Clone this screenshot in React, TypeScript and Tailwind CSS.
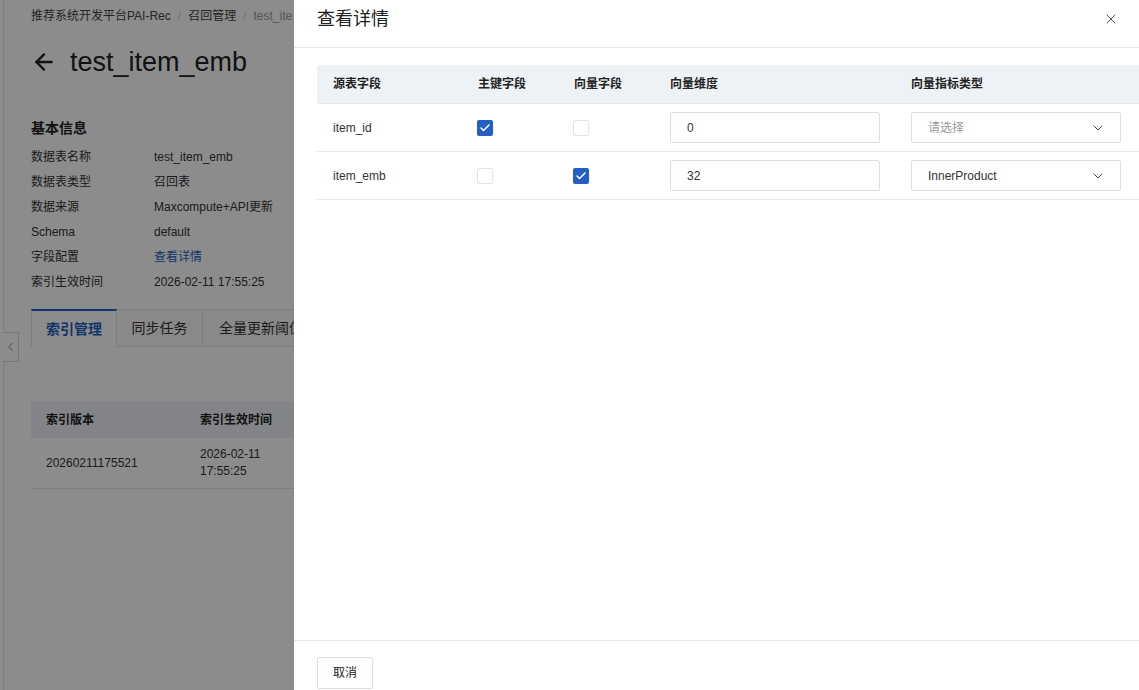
import { ArrowLeft, ChevronDown, ChevronLeft, X, Check } from "lucide-react";

const font = { fontFamily: '"Liberation Sans", "Noto Sans CJK SC", sans-serif' };

const info: [string, string, boolean?][] = [
  ["数据表名称", "test_item_emb"],
  ["数据表类型", "召回表"],
  ["数据来源", "Maxcompute+API更新"],
  ["Schema", "default"],
  ["字段配置", "查看详情", true],
  ["索引生效时间", "2026-02-11 17:55:25"],
];

const cols = "grid grid-cols-[145px_96px_96px_241px_244px]";

function Box({ checked }: { checked: boolean }) {
  if (checked)
    return (
      <span className="flex h-4 w-4 items-center justify-center rounded-[2px] bg-[#2460c2]">
        <Check className="h-3 w-3 text-white" strokeWidth={3} />
      </span>
    );
  return <span className="block h-4 w-4 rounded-[2px] border border-[#e3e3e3] bg-white" />;
}

export default function App() {
  return (
    <div className="relative h-[690px] w-[1139px] overflow-hidden bg-white text-[#333]" style={font}>
      {/* page underneath */}
      <div className="ml-[3px] h-full border-l border-[#e2e2e2] pl-[27px]">
        <div className="flex w-[262px] items-center gap-[7px] overflow-hidden whitespace-nowrap pt-[8px] text-xs leading-4 text-[#444]">
          <span>推荐系统开发平台PAI-Rec</span>
          <span className="text-[#ccc]">/</span>
          <span>召回管理</span>
          <span className="text-[#ccc]">/</span>
          <span className="text-[#999]">test_item_emb</span>
        </div>
        <div className="mt-[20px] flex items-center gap-[13px]">
          <ArrowLeft className="h-[26px] w-[26px] text-[#222]" strokeWidth={2.2} />
          <h1 className="text-[27px] font-medium leading-9 text-[#222]">test_item_emb</h1>
        </div>
        <h2 className="mt-[36px] text-sm font-bold leading-6 text-[#222]">基本信息</h2>
        <div className="mt-[4px] flex flex-col">
          {info.map(([k, v, link]) => (
            <div key={k} className="flex h-[25px] items-center text-xs">
              <span className="w-[123px]">{k}</span>
              <span className={link ? "text-[#1f5fc4]" : ""}>{v}</span>
            </div>
          ))}
        </div>
        <div className="mt-[15px] flex h-[38px] text-sm">
          <div className="flex w-[86px] items-center justify-center border-x border-t-2 border-[#e3e3e3] border-t-[#1f5fc4] font-bold text-[#1f5fc4]">
            索引管理
          </div>
          <div className="flex w-[86px] items-center justify-center border-b border-r border-t border-[#e3e3e3] bg-[#fafafa]">
            同步任务
          </div>
          <div className="flex flex-1 items-center border-b border-t border-[#e3e3e3] bg-[#fafafa] pl-4 whitespace-nowrap">
            全量更新阈值设置
          </div>
        </div>
        <div className="mt-[54px] text-xs">
          <div className="flex h-[37px] items-center bg-[#eef1f6] font-semibold text-[#222]">
            <span className="w-[169px] pl-[15px]">索引版本</span>
            <span>索引生效时间</span>
          </div>
          <div className="flex h-[51px] items-center border-b border-[#e6e6e6]">
            <span className="w-[169px] pl-[15px]">20260211175521</span>
            <span className="leading-[17px]">
              2026-02-11
              <br />
              17:55:25
            </span>
          </div>
        </div>
      </div>
      <button className="absolute left-[3px] top-[332px] flex h-[30px] w-[16px] items-center justify-center border border-l-0 border-[#d8d8d8] bg-white text-[#888]">
        <ChevronLeft className="h-4 w-4" strokeWidth={1.5} />
      </button>

      {/* mask */}
      <div className="absolute inset-0 bg-black/45" />

      {/* drawer */}
      <div className="absolute bottom-0 right-0 top-0 flex w-[845px] flex-col bg-white">
        <div className="flex h-[48px] shrink-0 items-start justify-between border-b border-[#e6e6e6] pl-[23px] pr-[20px] pt-[7px]">
          <span className="text-lg leading-6 text-[#222]">查看详情</span>
          <X className="mt-[4px] h-4 w-4 text-[#555]" strokeWidth={1.5} />
        </div>
        <div className="flex-1 pl-[23px] pt-[17px] text-xs">
          <div className={`${cols} h-[39px] items-center border-b border-[#e8e8e8] bg-[#eef2f7] font-semibold text-[#222]`}>
            <span className="pl-4">源表字段</span>
            <span className="pl-4">主键字段</span>
            <span className="pl-4">向量字段</span>
            <span className="pl-4">向量维度</span>
            <span className="pl-4">向量指标类型</span>
          </div>
          {[
            { name: "item_id", pk: true, vec: false, dim: "0", metric: "" },
            { name: "item_emb", pk: false, vec: true, dim: "32", metric: "InnerProduct" },
          ].map((r) => (
            <div key={r.name} className={`${cols} h-[48px] items-center border-b border-[#e8e8e8]`}>
              <span className="pl-4">{r.name}</span>
              <span className="pl-[15px]">
                <Box checked={r.pk} />
              </span>
              <span className="pl-[15px]">
                <Box checked={r.vec} />
              </span>
              <span className="pl-4">
                <div className="flex h-[31px] w-[210px] items-center rounded-[2px] border border-[#dedede] px-4">
                  {r.dim}
                </div>
              </span>
              <span className="pl-4">
                <div className="flex h-[31px] w-[210px] items-center justify-between rounded-[2px] border border-[#dedede] pl-4 pr-[14px]">
                  <span className={r.metric ? "" : "text-[#999]"}>{r.metric || "请选择"}</span>
                  <ChevronDown className="h-4 w-4 text-[#444]" strokeWidth={1.5} />
                </div>
              </span>
            </div>
          ))}
        </div>
        <div className="h-[50px] shrink-0 border-t border-[#e6e6e6] pl-[23px] pt-[16px]">
          <button className="flex h-[32px] w-[56px] items-center justify-center rounded-[2px] border border-[#dedede] text-xs text-[#222]">
            取消
          </button>
        </div>
      </div>
    </div>
  );
}
